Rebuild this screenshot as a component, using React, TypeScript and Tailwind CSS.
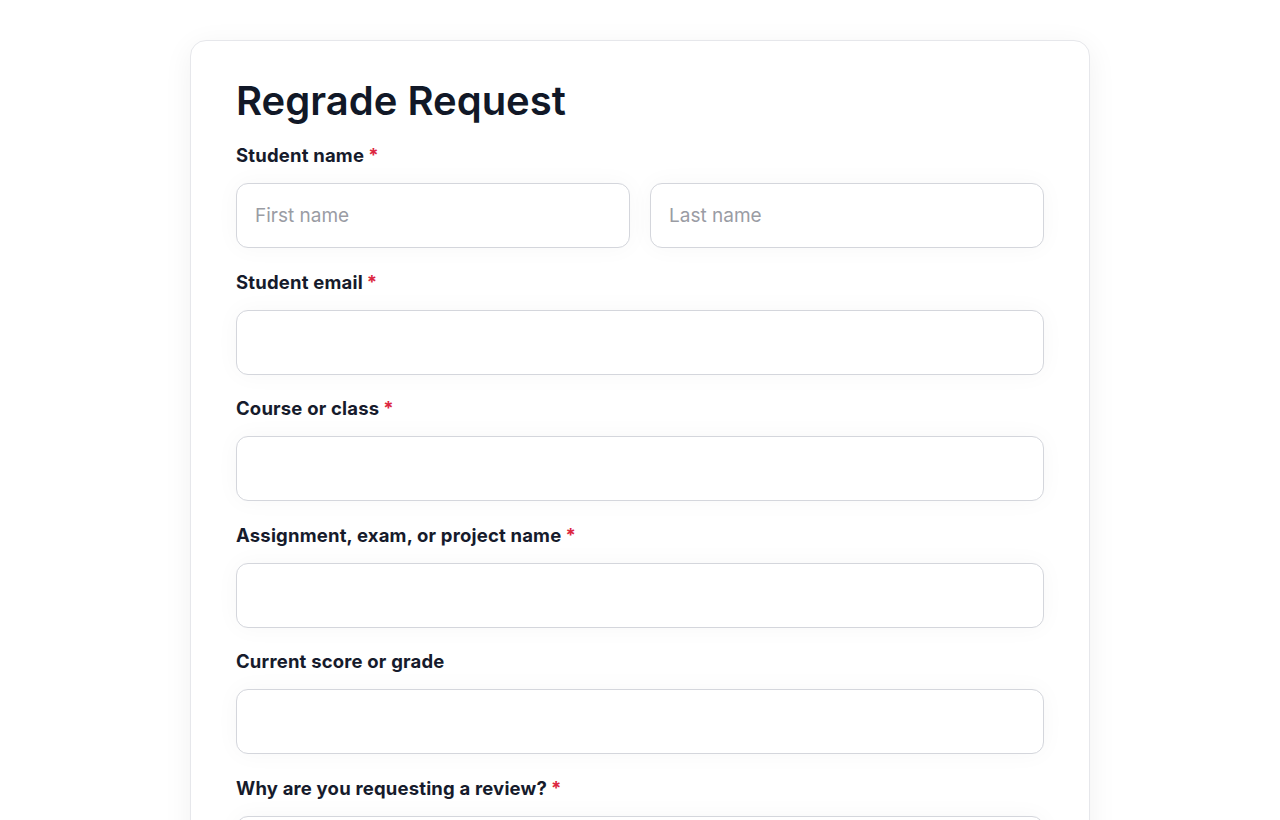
import React from 'react';

const Label = ({ text, required }: { text: string; required?: boolean }) => (
  <label className="block text-[18.5px] leading-6 font-bold tracking-[0.01em] text-[#161b2c] mt-px mb-4">
    {text}
    {required && <span className="text-[#dc2640] ml-1">*</span>}
  </label>
);

const inputCls =
  'w-full h-[65px] px-[18px] rounded-xl border border-[#d4d6dc] bg-white text-[19px] text-gray-900 placeholder:text-[#9a9ca4] shadow-[0_0_24px_rgba(0,0,0,0.035)] outline-none';

const App = () => {
  return (
    <div
      className="min-h-screen bg-white pt-10 pb-10 flex justify-center"
      style={{ fontFamily: 'Inter, "Noto Sans", sans-serif' }}
    >
      <div className="w-[900px] bg-white border border-[#e6e7eb] rounded-2xl shadow-[0_6px_30px_rgba(0,0,0,0.06)] px-[45px] pt-[36px] pb-10">
        <h1 className="text-[40px] leading-[48px] font-semibold text-[#111827] mb-[17px]">
          Regrade Request
        </h1>
        <form className="flex flex-col gap-[20.5px]">
          <div>
            <Label text="Student name" required />
            <div className="grid grid-cols-2 gap-5">
              <input className={inputCls} placeholder="First name" />
              <input className={inputCls} placeholder="Last name" />
            </div>
          </div>
          <div>
            <Label text="Student email" required />
            <input className={inputCls} type="email" />
          </div>
          <div>
            <Label text="Course or class" required />
            <input className={inputCls} />
          </div>
          <div>
            <Label text="Assignment, exam, or project name" required />
            <input className={inputCls} />
          </div>
          <div>
            <Label text="Current score or grade" />
            <input className={inputCls} />
          </div>
          <div>
            <Label text="Why are you requesting a review?" required />
            <textarea className="w-full h-[140px] px-[18px] py-4 rounded-xl border border-[#d4d6dc] bg-white text-[19px] shadow-[0_0_24px_rgba(0,0,0,0.035)] outline-none resize-none" />
          </div>
        </form>
      </div>
    </div>
  );
};

export default App;
